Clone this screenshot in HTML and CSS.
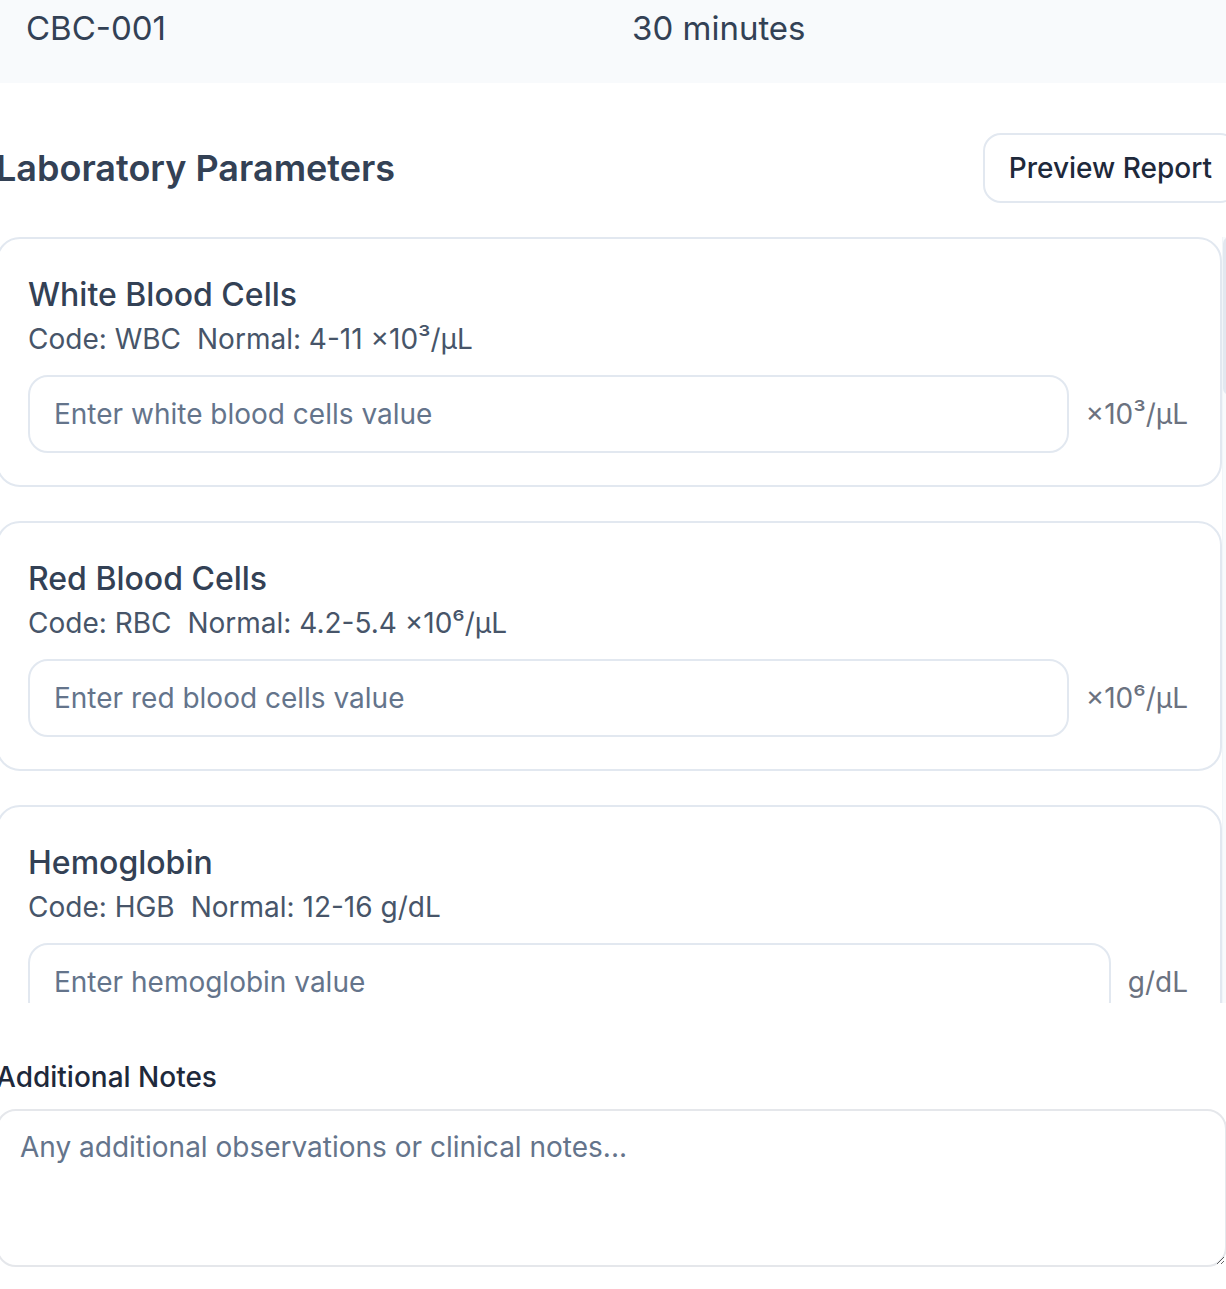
FILE: index.html
```html
<!DOCTYPE html>
<html lang="en">
<head>
<meta charset="utf-8">
<title>Laboratory Parameters</title>
<link rel="stylesheet" href="styles.css">
</head>
<body>
<div class="page">
  <section class="info-box">
    <div class="info-grid">
      <div class="info-value">CBC-001</div>
      <div class="info-value">30 minutes</div>
    </div>
  </section>

  <div class="section-head">
    <h2 class="section-title">Laboratory Parameters</h2>
    <button class="btn-outline" type="button">Preview Report</button>
  </div>

  <div class="param-scroll">
    <div class="param-list">
      <div class="param-card">
        <h3 class="param-name">White Blood Cells</h3>
        <p class="param-meta"><span>Code: WBC</span><span>Normal: 4-11 ×10³/μL</span></p>
        <div class="param-row"><input class="param-input" type="text" placeholder="Enter white blood cells value"><span class="param-unit">×10³/μL</span></div>
      </div>
      <div class="param-card">
        <h3 class="param-name">Red Blood Cells</h3>
        <p class="param-meta"><span>Code: RBC</span><span>Normal: 4.2-5.4 ×10⁶/μL</span></p>
        <div class="param-row"><input class="param-input" type="text" placeholder="Enter red blood cells value"><span class="param-unit">×10⁶/μL</span></div>
      </div>
      <div class="param-card">
        <h3 class="param-name">Hemoglobin</h3>
        <p class="param-meta"><span>Code: HGB</span><span>Normal: 12-16 g/dL</span></p>
        <div class="param-row"><input class="param-input" type="text" placeholder="Enter hemoglobin value"><span class="param-unit">g/dL</span></div>
      </div>
      <div class="param-card">
        <h3 class="param-name">Hematocrit</h3>
        <p class="param-meta"><span>Code: HCT</span><span>Normal: 36-46 %</span></p>
        <div class="param-row"><input class="param-input" type="text" placeholder="Enter hematocrit value"><span class="param-unit">%</span></div>
      </div>
      <div class="param-card">
        <h3 class="param-name">Platelets</h3>
        <p class="param-meta"><span>Code: PLT</span><span>Normal: 150-450 ×10³/μL</span></p>
        <div class="param-row"><input class="param-input" type="text" placeholder="Enter platelets value"><span class="param-unit">×10³/μL</span></div>
      </div>
      <div class="param-card">
        <h3 class="param-name">Mean Corpuscular Volume</h3>
        <p class="param-meta"><span>Code: MCV</span><span>Normal: 80-100 fL</span></p>
        <div class="param-row"><input class="param-input" type="text" placeholder="Enter mean corpuscular volume value"><span class="param-unit">fL</span></div>
      </div>
      <div class="param-card">
        <h3 class="param-name">Mean Corpuscular Hemoglobin</h3>
        <p class="param-meta"><span>Code: MCH</span><span>Normal: 27-33 pg</span></p>
        <div class="param-row"><input class="param-input" type="text" placeholder="Enter mean corpuscular hemoglobin value"><span class="param-unit">pg</span></div>
      </div>
      <div class="param-card">
        <h3 class="param-name">MCHC</h3>
        <p class="param-meta"><span>Code: MCHC</span><span>Normal: 32-36 g/dL</span></p>
        <div class="param-row"><input class="param-input" type="text" placeholder="Enter mchc value"><span class="param-unit">g/dL</span></div>
      </div>
      <div class="param-card">
        <h3 class="param-name">Red Cell Distribution Width</h3>
        <p class="param-meta"><span>Code: RDW</span><span>Normal: 11.5-14.5 %</span></p>
        <div class="param-row"><input class="param-input" type="text" placeholder="Enter red cell distribution width value"><span class="param-unit">%</span></div>
      </div>
      <div class="param-card">
        <h3 class="param-name">Neutrophils</h3>
        <p class="param-meta"><span>Code: NEUT</span><span>Normal: 40-70 %</span></p>
        <div class="param-row"><input class="param-input" type="text" placeholder="Enter neutrophils value"><span class="param-unit">%</span></div>
      </div>
      <div class="param-card">
        <h3 class="param-name">Lymphocytes</h3>
        <p class="param-meta"><span>Code: LYMPH</span><span>Normal: 20-40 %</span></p>
        <div class="param-row"><input class="param-input" type="text" placeholder="Enter lymphocytes value"><span class="param-unit">%</span></div>
      </div>
      <div class="param-card">
        <h3 class="param-name">Monocytes</h3>
        <p class="param-meta"><span>Code: MONO</span><span>Normal: 2-8 %</span></p>
        <div class="param-row"><input class="param-input" type="text" placeholder="Enter monocytes value"><span class="param-unit">%</span></div>
      </div>
      <div class="param-card">
        <h3 class="param-name">Eosinophils</h3>
        <p class="param-meta"><span>Code: EOS</span><span>Normal: 1-4 %</span></p>
        <div class="param-row"><input class="param-input" type="text" placeholder="Enter eosinophils value"><span class="param-unit">%</span></div>
      </div>
    </div>
    <div class="scroll-track"><div class="scroll-thumb"></div></div>
  </div>

  <div class="notes">
    <label class="notes-label" for="notes">Additional Notes</label>
    <textarea id="notes" class="notes-input" placeholder="Any additional observations or clinical notes..."></textarea>
  </div>
</div>
</body>
</html>
```

FILE: styles.css
```css
html, body {
  margin: 0;
  padding: 0;
  background: #ffffff;
  overflow: hidden;
}

body {
  font-family: Inter, "Liberation Sans", sans-serif;
  color: #1e293b;
}

.page {
  margin-left: -4px;
  width: 1240px;
}

.info-box {
  background: #f8fafc;
  padding: 4px 0 31px 30px;
}

.info-grid {
  display: grid;
  grid-template-columns: 606px 1fr;
}

.info-value {
  font-size: 33px;
  line-height: 48px;
  color: #334155;
}

.section-head {
  margin-top: 50px;
  display: flex;
  align-items: center;
  justify-content: space-between;
  height: 70px;
}

.section-title {
  margin: 0;
  font-size: 36px;
  line-height: 48px;
  font-weight: 600;
  color: #334155;
}

.btn-outline {
  height: 70px;
  padding: 0 24px;
  margin-right: -2px;
  box-sizing: border-box;
  border: 2px solid #e2e8f0;
  border-radius: 18px;
  background: #ffffff;
  font-family: inherit;
  font-size: 28px;
  font-weight: 500;
  color: #1e293b;
}

.param-scroll {
  position: relative;
  margin-top: 34px;
}

.param-list {
  height: 766px;
  overflow: hidden;
  padding-right: 14px;
  display: flex;
  flex-direction: column;
  gap: 34px;
}

.scroll-track {
  position: absolute;
  top: 0;
  right: 0;
  width: 14px;
  height: 766px;
  background: #f8fafc;
  border-left: 1px solid #f1f5f9;
  box-sizing: border-box;
}

.scroll-thumb {
  height: 158px;
  border-radius: 7px;
  background: #e2e8f0;
}

.param-card {
  flex-shrink: 0;
  border: 2px solid #e2e8f0;
  border-radius: 24px;
  padding: 32px 32px 32px 30px;
  background: #ffffff;
}

.param-name {
  margin: 0;
  font-size: 32px;
  line-height: 48px;
  font-weight: 500;
  color: #334155;
}

.param-meta {
  margin: 0;
  display: flex;
  gap: 16px;
  font-size: 28px;
  line-height: 40px;
  color: #475569;
}

.param-row {
  margin-top: 16px;
  display: flex;
  align-items: center;
  gap: 17px;
}

.param-input {
  flex: 1;
  min-width: 0;
  height: 78px;
  box-sizing: border-box;
  border: 2px solid #e2e8f0;
  border-radius: 20px;
  padding: 0 24px;
  font-family: inherit;
  font-size: 28px;
  color: #1e293b;
  background: #ffffff;
  outline: none;
}

.param-input::placeholder {
  color: #64748b;
}

.param-unit {
  font-size: 28px;
  line-height: 40px;
  color: #6b7280;
  white-space: nowrap;
}

.notes {
  margin-top: 54px;
}

.notes-label {
  display: block;
  margin-bottom: 12px;
  font-size: 28px;
  line-height: 40px;
  font-weight: 500;
  color: #1e293b;
}

.notes-input {
  display: block;
  width: 1231px;
  height: 158px;
  box-sizing: border-box;
  border: 2px solid #e5e7eb;
  border-radius: 20px;
  padding: 16px 22px;
  font-family: inherit;
  font-size: 28px;
  line-height: 40px;
  color: #1e293b;
  resize: vertical;
  outline: none;
}

.notes-input::placeholder {
  color: #64748b;
}
```
